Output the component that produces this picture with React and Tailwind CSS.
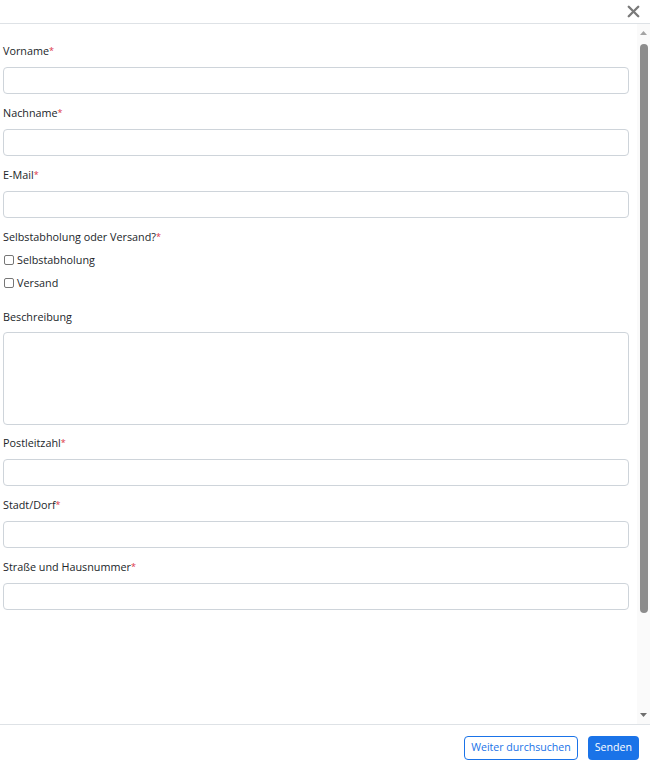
import { X } from 'lucide-react'

function Label({ text, required }) {
  return (
    <label className="block h-4 leading-4 mb-2 text-[10.8px] text-[#212529]">
      {text}
      {required && <span className="text-[#dc3545] text-[9px] align-top">*</span>}
    </label>
  )
}

function Field({ text, required = true, className = 'mb-[11px]' }) {
  return (
    <div className={className}>
      <Label text={text} required={required} />
      <input type="text" className="block w-full h-[27px] rounded border border-[#ced4da] bg-white px-2 text-[12px] outline-none" />
    </div>
  )
}

function Check({ text }) {
  return (
    <label className="flex items-center h-4 leading-4 text-[10.8px] text-[#212529]">
      <span className="ml-[1px] mr-[3px] w-[10px] h-[10px] rounded-[2px] border border-[#767676] bg-white"></span>
      {text}
    </label>
  )
}

export default function App() {
  return (
    <div className="h-[764px] w-[650px] flex flex-col bg-white overflow-hidden" style={{ fontFamily: '"Open Sans", "Noto Sans", sans-serif' }}>
      <div className="h-6 shrink-0 flex justify-end items-center border-b border-[#dee2e6] pr-[7px]">
        <X className="w-[19px] h-[19px] text-[#7a7a7a]" strokeWidth={3} />
      </div>

      <div className="flex-1 flex min-h-0">
        <div className="flex-1 pl-[3px] pr-[8px] pt-[19px]">
          <Field text="Vorname" />
          <Field text="Nachname" />
          <Field text="E-Mail" />

          <div className="mb-[18px]">
            <Label text="Selbstabholung oder Versand?" required />
            <div className="flex flex-col gap-[7px] -mt-[1px]">
              <Check text="Selbstabholung" />
              <Check text="Versand" />
            </div>
          </div>

          <div className="mb-[10px]">
            <label className="block h-4 leading-4 mb-[7px] text-[10.8px] text-[#212529]">Beschreibung</label>
            <textarea className="block w-full h-[93px] rounded border border-[#ced4da] resize-none outline-none"></textarea>
          </div>

          <Field text="Postleitzahl" />
          <Field text="Stadt/Dorf" />
          <Field text="Straße und Hausnummer" />
        </div>

        <div className="w-[13px] shrink-0 flex flex-col items-center bg-[#fafafa] pt-[6px] pb-[6px]">
          <svg width="9" height="6" viewBox="0 0 9 6" className="mb-[8px]">
            <path d="M4.5 1 L8 5 L1 5 Z" fill="#a3a3a3" />
          </svg>
          <div className="w-[8px] h-[569px] rounded-full bg-[#8c8c8c]"></div>
          <div className="flex-1"></div>
          <svg width="9" height="6" viewBox="0 0 9 6">
            <path d="M1 1 L8 1 L4.5 5 Z" fill="#6e6e6e" />
          </svg>
        </div>
      </div>

      <div className="h-[40px] shrink-0 border-t border-[#dee2e6] flex items-center justify-end gap-[10px] pr-[11px] pt-[7px]">
        <button className="h-[24px] px-[6px] rounded border border-[#1a73e8] text-[#1a73e8] text-[10.6px] bg-white">Weiter durchsuchen</button>
        <button className="h-[24px] px-[7px] rounded bg-[#1a73e8] text-white text-[10.6px]">Senden</button>
      </div>
    </div>
  )
}
